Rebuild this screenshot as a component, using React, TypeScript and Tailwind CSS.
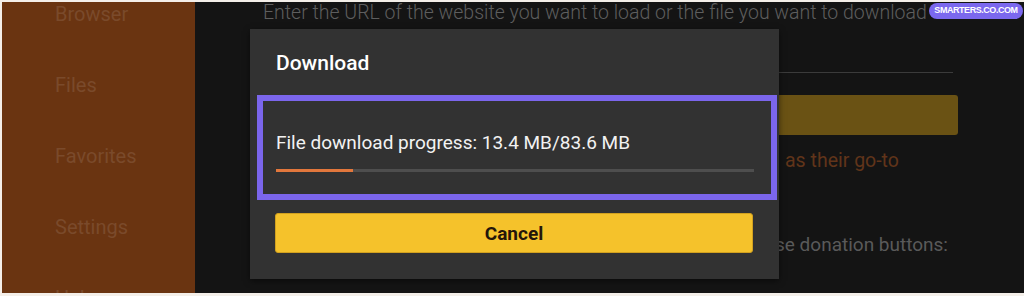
export default function App() {
  const menu = ['Browser', 'Files', 'Favorites', 'Settings', 'Help'];
  const progress = 13.4 / 83.6;

  return (
    <div className="w-[1024px] h-[296px] bg-[#f4efe9] pt-[2px] pl-[2px] pb-[3px] overflow-hidden font-['Roboto',sans-serif]">
      <div className="flex h-full overflow-hidden">
        {/* Sidebar */}
        <div className="w-[193px] shrink-0 bg-[#6a3411] pl-[53px] flex flex-col gap-[47px] overflow-hidden">
          {menu.map((item) => (
            <div key={item} className="text-[20px] leading-6 text-[#7a4a2b]">
              {item}
            </div>
          ))}
        </div>

        {/* Main content behind the dialog */}
        <div className="relative flex-1 bg-[#141414] overflow-hidden">
          <div className="pl-[68px] flex flex-col">
            <div className="-mt-[1px] h-6 text-[19.5px] leading-6 font-light text-[#5e5e5e] whitespace-nowrap">
              Enter the URL of the website you want to load or the file you want to download
            </div>
            <div className="mt-[47px] h-px w-[690px] bg-[#3b3b3b]" />
            <div className="mt-[22px] h-[40px] w-[695px] rounded-[3px] bg-[#6a5214]" />
            <div className="mt-[14px] ml-[522px] text-[19.5px] leading-6 text-[#61341a] whitespace-nowrap">
              as their go-to
            </div>
            <div className="mt-[60px] ml-[512px] text-[19px] leading-6 text-[#5a5a5a] whitespace-nowrap">
              se donation buttons:
            </div>
          </div>

          {/* Download dialog */}
          <div className="absolute left-[55px] top-[27px] w-[529px] h-[250px] bg-[#323232] shadow-[0_2px_6px_rgba(0,0,0,0.5)] flex flex-col">
            <div className="mt-[22px] ml-[26px] text-[21px] leading-6 font-medium text-white">Download</div>
            <div className="mt-[20px] ml-[7px] w-[520px] h-[105px] border-[6px] border-[#7b66ec] pl-[13px] pt-[31px]">
              <div className="text-[19px] leading-[22px] text-[#f2f2f2] whitespace-nowrap">
                File download progress: 13.4 MB/83.6 MB
              </div>
              <div className="mt-[15px] w-[478px] h-[3px] bg-[#4e4e4e]">
                <div className="h-full bg-[#e2773c]" style={{ width: `${progress * 100}%` }} />
              </div>
            </div>
            <button className="mt-[13px] ml-[25px] w-[478px] h-[40px] rounded-[3px] bg-[#f5c22b] border border-[#d2a11f] pt-[2px] text-[19px] font-bold text-[#24160a]">
              Cancel
            </button>
          </div>

          {/* Watermark badge */}
          <div className="absolute top-[1px] right-[1px] w-[94px] h-[16px] rounded-full bg-[#7b68ee] flex items-center justify-center font-['Liberation_Sans',sans-serif] text-[9px] font-black tracking-tighter text-white">
            SMARTERS.CO.COM
          </div>
        </div>
      </div>
    </div>
  );
}
